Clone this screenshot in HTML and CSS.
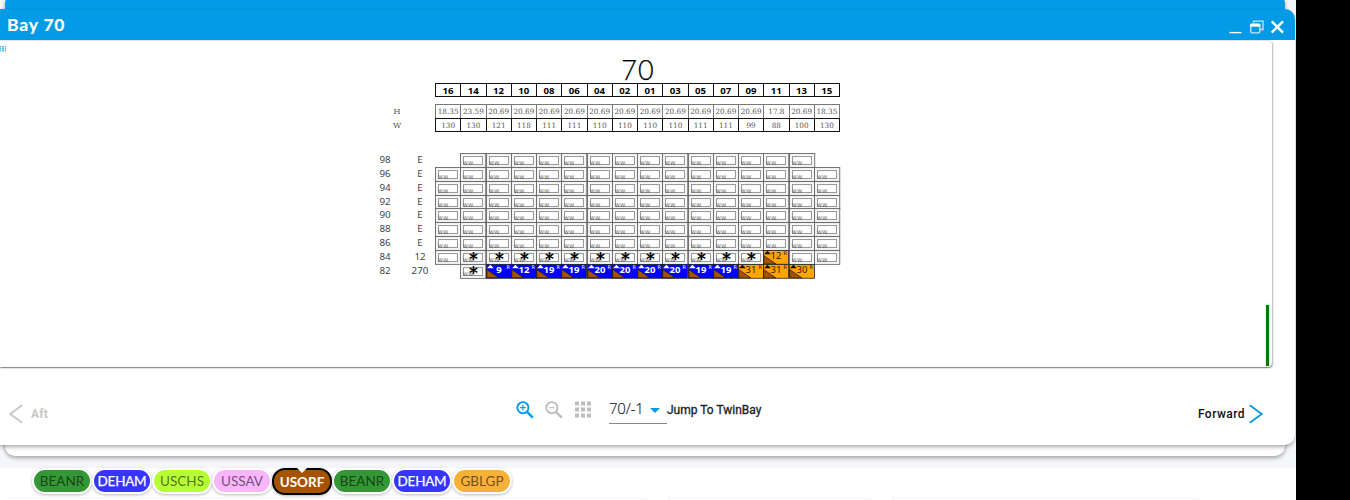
FILE: index.html
```html
<!DOCTYPE html>
<html lang="en">
<head>
<meta charset="utf-8">
<title>Bay 70</title>
<link rel="stylesheet" href="styles.css">
</head>
<body>
<div class="app">
  <div class="window window-back"></div>
  <section class="window window-front">
    <header class="titlebar">
      <h1 class="title">Bay 70</h1>
      <svg class="window-actions" width="56" height="18" viewBox="0 0 56 18" fill="none">
        <path d="M.5 14.6H12.5" stroke="#fff" stroke-width="1.4"/>
        <path d="M24.5 4.8V3.2H34V11.5H31" stroke="#c4e7fb" stroke-width="1.3"/>
        <rect x="21.8" y="6" width="9" height="8.8" rx="1" stroke="#c4e7fb" stroke-width="1.3"/>
        <path d="M21.4 7.4H31.2" stroke="#fff" stroke-width="2.6"/>
        <path d="M42.7 3.4L54 14.7M54 3.4L42.7 14.7" stroke="#fff" stroke-width="2.4"/>
      </svg>
    </header>
    <main class="panel">
      <div class="grip"><i></i><i></i><i></i></div>
      <div class="bay">
        <div class="bay-number">70</div>
        <div class="row heads" id="heads"></div>
        <div class="row limits heights" id="heights"></div>
        <div class="row limits weights" id="weights"></div>
        <div class="tiers" id="tiers"></div>
      </div>
      <div class="gauge"></div>
    </main>
    <footer class="toolbar">
      <div class="nav aft">
        <svg width="14" height="20" viewBox="0 0 14 20" fill="none" stroke="#c6c6c6" stroke-width="1.8"><path d="M13 1.2L1.2 10L13 18.8"/></svg>
        <span>Aft</span>
      </div>
      <div class="tools">
        <svg class="tool" width="18" height="18" viewBox="0 0 18 18" fill="none" stroke="#039be5"><circle cx="6.9" cy="6.7" r="5.6" stroke-width="1.9"/><path d="M10.8 10.6L16.8 16.6" stroke-width="2.4"/><path d="M4 6.7H9.8M6.9 3.8V9.6" stroke-width="1.2"/></svg>
        <svg class="tool" width="18" height="18" viewBox="0 0 18 18" fill="none" stroke="#bdbdbd"><circle cx="6.9" cy="6.7" r="5.6" stroke-width="1.9"/><path d="M10.8 10.6L16.8 16.6" stroke-width="2.4"/><path d="M4.2 6.7H9.6" stroke-width="1.2"/></svg>
        <svg class="tool" width="17" height="17" viewBox="0 0 17 17" fill="#bdbdbd"><path d="M0 .5h4v4H0zM6 .5h4v4H6zM12 .5h4v4h-4zM0 6.5h4v4H0zM6 6.5h4v4H6zM12 6.5h4v4h-4zM0 12.5h4v4H0zM6 12.5h4v4H6zM12 12.5h4v4h-4z"/></svg>
        <div class="select"><span>70/-1</span><svg width="10" height="5" viewBox="0 0 10 5"><path d="M0 0H10L5 5Z" fill="#039be5"/></svg></div>
        <span class="jump">Jump To TwinBay</span>
      </div>
      <div class="nav forward">
        <span>Forward</span>
        <svg width="14" height="20" viewBox="0 0 14 20" fill="none" stroke="#039be5" stroke-width="1.8"><path d="M.8 1.2L12.8 10L.8 18.8"/></svg>
      </div>
    </footer>
  </section>
  <div class="ports">
    <div class="chips">
      <span class="chip green">BEANR</span>
      <span class="chip blue">DEHAM</span>
      <span class="chip lime">USCHS</span>
      <span class="chip pink">USSAV</span>
      <span class="chip current">USORF</span>
      <span class="chip green">BEANR</span>
      <span class="chip blue">DEHAM</span>
      <span class="chip orange">GBLGP</span>
    </div>
    <div class="cards"><div class="card"></div><div class="card"></div><div class="card"></div></div>
  </div>
</div>
<script src="bay.js"></script>
</body>
</html>
```
FILE: styles.css
```css
body { margin: 0; width: 1350px; height: 500px; overflow: hidden; background: #000; font-family: Lato, sans-serif; }
.app { position: relative; width: 1296px; height: 500px; overflow: hidden; background: #f5f6f9; display: flex; flex-direction: column; justify-content: flex-end; }
.window { position: absolute; box-sizing: border-box; background: #fff; border-radius: 10px; box-shadow: 0 2px 4px rgba(0,0,0,.34); }
.window-back { left: 5px; top: -6px; width: 1280px; height: 462px; border-top: 20px solid #039be5; }
.window-front { left: -1px; top: 9px; width: 1296px; height: 436px; padding-left: 1px; border-radius: 0 10px 10px 0; display: flex; flex-direction: column; box-shadow: 0 3px 4px -1px rgba(0,0,0,.32), 0 0 1px rgba(0,0,0,.3); }
.titlebar { height: 31px; flex: none; margin-left: -1px; padding: 0 10px 0 8px; background: #039be5; border-radius: 0 10px 0 0; display: flex; justify-content: space-between; align-items: center; }
.title { margin: 1px 0 0; font-size: 17.5px; line-height: 28px; font-weight: 900; letter-spacing: .8px; color: #fff; }
.window-actions { margin-top: 4px; }
.panel { box-sizing: border-box; width: 1272px; height: 327px; flex: none; border-radius: 0 4px 4px 0; box-shadow: 0 1px 1px rgba(0,0,0,.35), 1px 1px 2px rgba(0,0,0,.25); display: flex; border-top: 1px solid #e4e4e4; }
.grip { width: 6px; height: 6px; margin-top: 5px; display: flex; gap: 1px; }
.grip i { flex: 1; background: repeating-linear-gradient(#49b4ea 0 1px, #a5daf5 1px 2px); }
.bay { width: 480px; margin-left: 360px; padding-top: 12px; color: #555; }
.bay-number { height: 30px; margin-left: 69px; width: 406px; text-align: center; font: 300 27px/33px Lato, sans-serif; letter-spacing: 1.2px; color: #000; -webkit-text-stroke: .25px #000; }
.row { display: grid; grid-template-columns: 69px repeat(16, 25.25px); box-sizing: border-box; text-align: center; }
.cell { box-sizing: border-box; line-height: 13px; margin-right: -1px; border: 1px solid #111; }
.heads { height: 14px; margin-bottom: 7px; font: 700 9.6px/15px "Open Sans", sans-serif; letter-spacing: .25px; color: #000; }
.heads .cell { height: 14px; line-height: 13px; }
.limits { height: 14px; font: 7.3px/13px "DejaVu Serif", serif; color: #555; }
.heights .cell { border-color: #777; border-bottom: 0; }
.weights .cell { height: 14px; line-height: 13px; }
.label { width: 62px; font-size: 8px; line-height: 15px; }
.tiers { margin-top: 21px; }
.tier { height: 13.86px; display: grid; grid-template-columns: 38px 32px repeat(16, 25.25px); font: 9.8px/14px "Noto Sans", sans-serif; text-align: center; color: #444; }
.tier-load { margin-right: 0; }
.slot { display: block; width: 25.25px; height: 13.86px; overflow: visible; margin-left: -1px; }
.ww { font: 5px "DejaVu Sans", sans-serif; fill: #555; }
.star { font: 700 17px "DejaVu Sans", sans-serif; fill: #000; text-anchor: middle; }
.count { font: 9.5px "Noto Sans", sans-serif; text-anchor: middle; }
.loaded-blue { font-weight: 700; }
.reefer { font: 5px "DejaVu Sans", sans-serif; }
.gauge { width: 3px; height: 61px; margin: 264px 3px 0 auto; background: #007d00; box-shadow: 0 0 1px #007d00; }
.toolbar { flex: 1; display: flex; align-items: center; justify-content: space-between; padding: 0 32px 0 9px; font: 700 12px Roboto, sans-serif; }
.nav { display: flex; align-items: center; margin-top: 16px; width: 110px; }
.aft { gap: 8px; color: #c6c6c6; width: 120px; }
.aft span { letter-spacing: .2px; }
.forward { gap: 4px; justify-content: flex-end; font-weight: 500; letter-spacing: .45px; color: #111; }
.tools { display: flex; align-items: center; flex: 1; margin: 7px 0 0 387px; }
.tool { margin-right: 11px; flex: none; }
.tool:nth-child(2) { margin-right: 12px; }
.tool:nth-child(3) { margin-right: 17px; }
.select { height: 30px; width: 58px; box-sizing: border-box; margin-top: -1px; padding-right: 7px; display: flex; align-items: center; justify-content: space-between; border-bottom: 1px solid #888; font: 300 15px/28px "Open Sans", sans-serif; color: #222; letter-spacing: -.2px; -webkit-text-stroke: .2px #222; }
.select svg { margin-top: 4px; }
.select span { margin-top: -2px; }
.jump { font-weight: 400; -webkit-text-stroke: .3px #222; color: #222; white-space: nowrap; }
.ports { position: relative; height: 32px; background: #fff; }
.chips { display: flex; padding: 0 0 0 32px; height: 26px; align-items: center; }
.chip { box-sizing: border-box; width: 60px; height: 26px; flex: none; border: 2px solid #fff; border-radius: 13px; box-shadow: 0 1px 3px rgba(0,0,0,.28); text-align: center; font: 400 13.5px/22px Lato, sans-serif; color: rgba(0,0,0,.58); }
.green { background: #349735; }
.blue { background: #3535ff; color: #fff; -webkit-text-stroke: .25px #fff; letter-spacing: -.25px; }
.lime { background: #b6ff35; }
.pink { background: #fab5fc; }
.orange { background: #f8b137; }
.current { position: relative; border-color: #000; background: #a65300; color: #fff; font-weight: 700; line-height: 24px; height: 27px; }
.current::before { content: ""; position: absolute; left: 23px; top: -2px; border: 5px solid transparent; border-top-color: #fff; border-bottom: 0; }
.cards { display: flex; gap: 20px; margin-top: 5px; }
.card { height: 8px; border-radius: 5px; box-shadow: 0 0 2px rgba(0,0,0,.15); width: 204px; }
.card:first-child { width: 642px; margin-left: 6px; }
.card:last-child { width: 308px; }
```
FILE: bay.js
```js
const stacks = ['16','14','12','10','08','06','04','02','01','03','05','07','09','11','13','15'];
const heights = ['18.35','23.59','20.69','20.69','20.69','20.69','20.69','20.69','20.69','20.69','20.69','20.69','20.69','17.8','20.69','18.35'];
const weights = ['130','130','121','118','111','111','110','110','110','110','111','111','99','88','100','130'];
// One character per stack: blank = no slot, o = open, * = reserved, b / y = loaded.
const tiers = [
  ['98', 'E', ' oooooooooooooo '],
  ['96', 'E', 'oooooooooooooooo'],
  ['94', 'E', 'oooooooooooooooo'],
  ['92', 'E', 'oooooooooooooooo'],
  ['90', 'E', 'oooooooooooooooo'],
  ['88', 'E', 'oooooooooooooooo'],
  ['86', 'E', 'oooooooooooooooo'],
  ['84', '12', 'o************yoo'],
  ['82', '270', ' *bbbbbbbbbbyyy ']
];
const counts = ['', '', '9', '12', '19', '19', '20', '20', '20', '20', '19', '19', '31', '31', '30', ''];

function fillRow(id, label, values) {
  document.getElementById(id).innerHTML = `<span class="label">${label}</span>` +
    values.map(v => `<span class="cell">${v}</span>`).join('');
}

function slot(type, count) {
  if (type === ' ') return '<span></span>';
  let body;
  if (type === 'b' || type === 'y') {
    const blue = type === 'b';
    const ink = blue ? '#fff' : '#2b1c00';
    body = `<rect x=".4" y=".4" width="25.1" height="13.86" fill="${blue ? '#0000ff' : '#ffa500'}" stroke="#222" stroke-width=".8"/>
      <path d="M.8 5.6L12.8 13.8H.8Z" fill="#a65300" stroke="#111" stroke-width=".6"/>
      <path d="M1 4.2L4.4 .8L7.8 4.2Z" fill="${blue ? '#fff' : '#000'}"/>
      <text class="count${blue ? ' loaded-blue' : ''}" x="13" y="9.2" fill="${ink}">${count}</text>
      <text class="reefer" x="20.6" y="4.6" fill="${ink}">R</text>`;
  } else {
    body = `<rect x=".5" y=".5" width="25.25" height="13.86" fill="#fff" stroke="#666" stroke-width=".9"/>
      <rect x="1.8" y="1.7" width="22.4" height="11.3" fill="none" stroke="#e6e6e6" stroke-width=".6"/>
      <rect x="3.5" y="3.5" width="19" height="8" fill="#fff" stroke="#999" stroke-width="1.1"/>
      <text class="ww" x="2.7" y="12" textLength="10.5">WW</text>`;
    if (type === '*') body += '<text class="star" x="13.5" y="15.2">*</text>';
  }
  return `<svg class="slot" viewBox="0 0 25.25 13.86">${body}</svg>`;
}

fillRow('heads', '', stacks);
fillRow('heights', 'H', heights);
fillRow('weights', 'W', weights);
document.getElementById('tiers').innerHTML = tiers.map(([name, load, cells]) =>
  `<div class="tier"><span class="tier-name">${name}</span><span class="tier-load">${load}</span>` +
  [...cells].map((c, i) => slot(c, name === '84' ? '12' : counts[i])).join('') + '</div>').join('');
```
